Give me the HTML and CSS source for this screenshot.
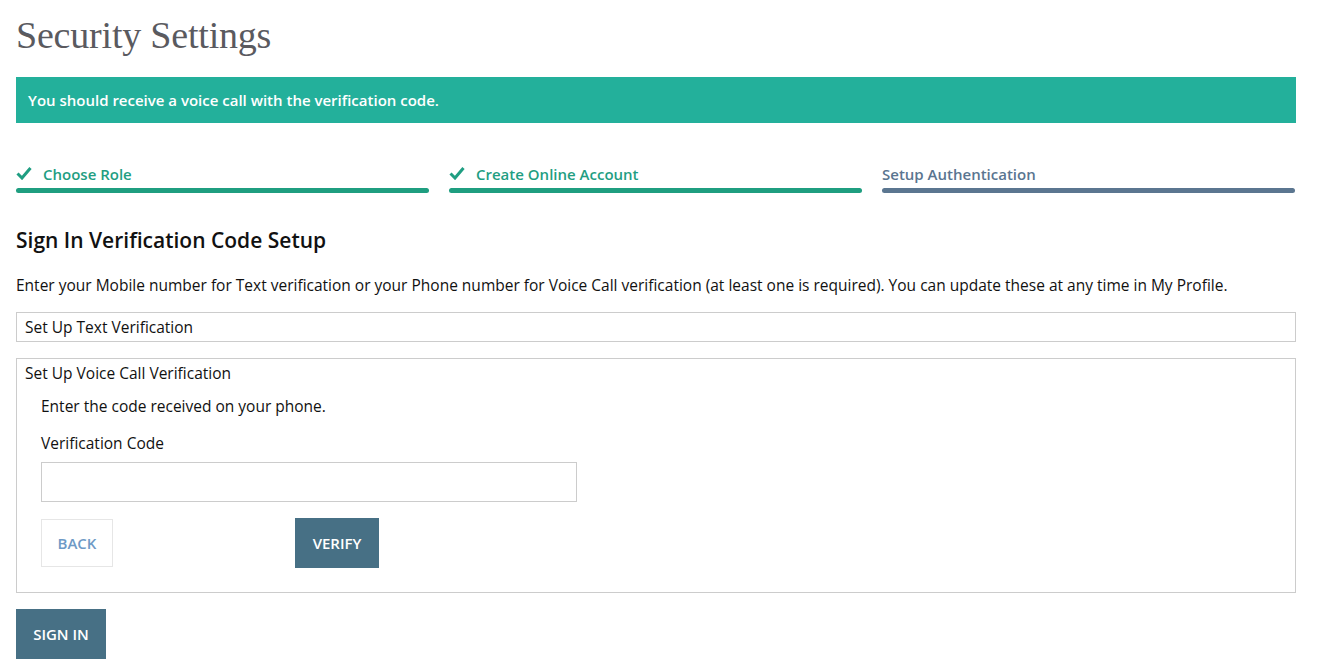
FILE: index.html
```html
<!DOCTYPE html>
<html lang="en">
<head>
<meta charset="utf-8">
<title>Security Settings</title>
<link rel="stylesheet" href="styles.css">
</head>
<body>
<main class="page">
  <h1 class="title">Security Settings</h1>
  <div class="banner">You should receive a voice call with the verification code.</div>

  <ol class="steps">
    <li class="step done">
      <div class="step-label">
        <svg class="check" viewBox="0 0 16 14" width="16" height="14" aria-hidden="true"><path d="M1.5 7.5 L6 12 L14.5 2" fill="none" stroke="currentColor" stroke-width="3" stroke-linecap="butt" stroke-linejoin="miter"/></svg>
        <span>Choose Role</span>
      </div>
      <div class="step-bar"></div>
    </li>
    <li class="step done">
      <div class="step-label">
        <svg class="check" viewBox="0 0 16 14" width="16" height="14" aria-hidden="true"><path d="M1.5 7.5 L6 12 L14.5 2" fill="none" stroke="currentColor" stroke-width="3" stroke-linecap="butt" stroke-linejoin="miter"/></svg>
        <span>Create Online Account</span>
      </div>
      <div class="step-bar"></div>
    </li>
    <li class="step current">
      <div class="step-label"><span>Setup Authentication</span></div>
      <div class="step-bar"></div>
    </li>
  </ol>

  <h2 class="section-title">Sign In Verification Code Setup</h2>
  <p class="intro">Enter your Mobile number for Text verification or your Phone number for Voice Call verification (at least one is required). You can update these at any time in My Profile.</p>

  <section class="panel collapsed">
    <div class="panel-title">Set Up Text Verification</div>
  </section>

  <section class="panel">
    <div class="panel-title">Set Up Voice Call Verification</div>
    <div class="panel-body">
      <p class="hint">Enter the code received on your phone.</p>
      <label class="field-label" for="code">Verification Code</label>
      <input class="field-input" id="code" type="text">
      <div class="actions">
        <button class="btn btn-outline" type="button">BACK</button>
        <button class="btn btn-primary" type="button">VERIFY</button>
      </div>
    </div>
  </section>

  <button class="btn btn-primary btn-signin" type="button">SIGN IN</button>
</main>
</body>
</html>
```

FILE: styles.css
```css
* { box-sizing: border-box; }

html, body {
  margin: 0;
  padding: 0;
  background: #ffffff;
}

body {
  font-family: "Open Sans", Lato, "Liberation Sans", sans-serif;
  color: #111111;
  font-size: 15.5px;
}

.page {
  padding: 0 33px 0 16px;
  width: 1329px;
}

.title {
  margin: 0;
  padding-top: 13px;
  height: 77px;
  font-family: "Liberation Serif", "DejaVu Serif", serif;
  font-weight: 400;
  font-size: 38px;
  line-height: 44px;
  color: #5a5a5f;
  letter-spacing: -0.2px;
}

.banner {
  height: 46px;
  background: #23b09b;
  color: #ffffff;
  font-weight: 600;
  font-size: 15px;
  line-height: 46px;
  padding-left: 12px;
}

.steps {
  list-style: none;
  margin: 0;
  padding: 0;
  margin-top: 41px;
  display: grid;
  grid-template-columns: repeat(3, 1fr);
  column-gap: 20px;
  padding-right: 1px;
}

.step-label {
  display: flex;
  align-items: center;
  gap: 11px;
  height: 20px;
  font-weight: 600;
  font-size: 15px;
}

.check { margin-top: -2px; }

.step.done .step-label { color: #1f9e82; }
.step.current .step-label { color: #5a7590; }

.step-bar {
  margin-top: 4px;
  height: 5px;
  border-radius: 3px;
}

.step.done .step-bar { background: #1f9e80; }
.step.current .step-bar { background: #5b7690; }

.section-title {
  margin: 34px 0 0;
  font-size: 21px;
  line-height: 26px;
  font-weight: 600;
  color: #111111;
}

.intro {
  margin: 22px 0 0;
  line-height: 20px;
  color: #111111;
}

.panel {
  border: 1px solid #cccccc;
  margin-top: 16px;
}

.panel.collapsed { margin-top: 17px; height: 30px; }

.panel-title {
  padding: 4px 8px 0;
  line-height: 20px;
}

.panel-body {
  padding: 13px 16px 24px 24px;
}

.hint {
  margin: 0;
  line-height: 20px;
}

.field-label {
  display: block;
  margin-top: 17px;
  line-height: 20px;
}

.field-input {
  display: block;
  margin-top: 9px;
  width: 536px;
  height: 40px;
  border: 1px solid #cccccc;
  border-radius: 0;
  font: inherit;
}

.actions {
  display: flex;
  align-items: center;
  gap: 182px;
  margin-top: 16px;
}

.btn {
  font-family: inherit;
  font-size: 15px;
  font-weight: 600;
  border-radius: 0;
  cursor: pointer;
  padding: 0;
}

.btn-outline {
  width: 72px;
  height: 48px;
  background: #ffffff;
  border: 1px solid #e6e6e6;
  color: #6e9ac6;
}

.btn-primary {
  height: 50px;
  background: #477085;
  border: none;
  color: #ffffff;
  width: 84px;
}

.btn-signin {
  display: block;
  margin-top: 16px;
  width: 90px;
}
```
